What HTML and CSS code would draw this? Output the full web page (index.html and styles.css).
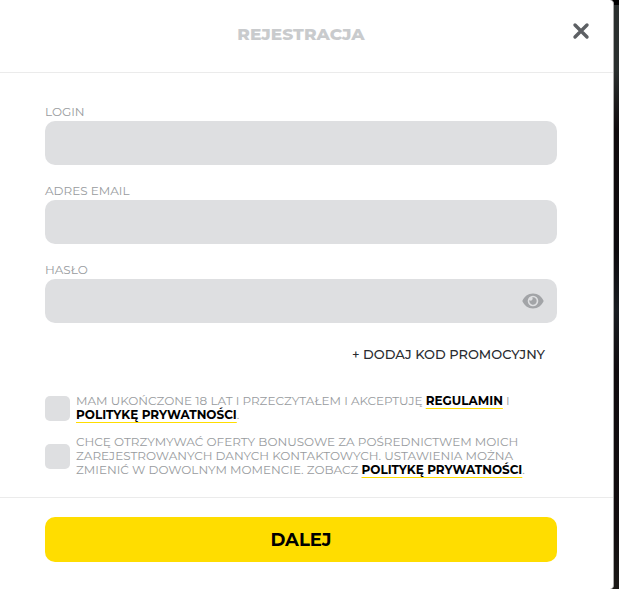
FILE: index.html
```html
<!DOCTYPE html>
<html lang="pl">
<head>
<meta charset="utf-8">
<meta name="viewport" content="width=device-width, initial-scale=1">
<title>Rejestracja</title>
<link rel="stylesheet" href="styles.css">
</head>
<body>
<main class="modal">
  <header class="modal-header">
    <h1 class="title">REJESTRACJA</h1>
    <button class="close" type="button" aria-label="Zamknij">
      <svg viewBox="0 0 18 18" width="18" height="18" aria-hidden="true"><path d="M3 3 15 15M15 3 3 15"/></svg>
    </button>
  </header>
  <form class="form">
    <div class="fields">
      <div class="field">
        <label for="login">LOGIN</label>
        <input class="input" id="login" type="text">
      </div>
      <div class="field">
        <label for="email">ADRES EMAIL</label>
        <input class="input" id="email" type="email">
      </div>
      <div class="field">
        <label for="password">HASŁO</label>
        <div class="password">
          <input class="input" id="password" type="password">
          <button class="reveal" type="button" aria-label="Pokaż hasło">
            <svg viewBox="0 0 22 16" width="22" height="16" aria-hidden="true">
              <path fill-rule="evenodd" d="M11 .5C6 .5 2.200 3.500.300 8c1.900 4.500 5.700 7.500 10.700 7.500S19.800 12.500 21.700 8C19.800 3.500 16 .5 11 .5Zm0 2.200a5.300 5.300 0 1 1 0 10.600 5.300 5.300 0 0 1 0-10.600Z"/>
              <path d="M11 4.300a3.700 3.700 0 1 1-3.600 2.800 1.900 1.900 0 0 0 2.700-2.700A4 4 0 0 1 11 4.300Z"/>
            </svg>
          </button>
        </div>
      </div>
      <button class="promo" type="button">+ DODAJ KOD PROMOCYJNY</button>
      <div class="consent">
        <input class="check" id="terms" type="checkbox">
        <label for="terms">MAM UKOŃCZONE 18 LAT I PRZECZYTAŁEM I AKCEPTUJĘ <a href="#regulamin">REGULAMIN</a> I <a href="#prywatnosc">POLITYKĘ PRYWATNOŚCI</a>.</label>
      </div>
      <div class="consent">
        <input class="check" id="offers" type="checkbox">
        <label for="offers">CHCĘ OTRZYMYWAĆ OFERTY BONUSOWE ZA POŚREDNICTWEM MOICH ZAREJESTROWANYCH DANYCH KONTAKTOWYCH. USTAWIENIA MOŻNA ZMIENIĆ W DOWOLNYM MOMENCIE. ZOBACZ <a href="#prywatnosc">POLITYKĘ PRYWATNOŚCI</a>.</label>
      </div>
    </div>
    <footer class="modal-footer">
      <button class="submit" type="submit">DALEJ</button>
    </footer>
  </form>
</main>
</body>
</html>
```
FILE: styles.css
```css
* { box-sizing: border-box; }

body {
  margin: 0;
  padding-right: 5px;
  min-height: 100vh;
  display: flex;
  background: linear-gradient(#000 0 5px, #2b302f 5px, #2b302f 70px, #100b0d 130px, #0d0b0e 250px, #191d21 310px, #100c0f 370px, #120e10 530px, #1b1917);
  font-family: Montserrat, Inter, "Liberation Sans", sans-serif;
}

button { border: 0; padding: 0; background: none; font: inherit; cursor: pointer; }
svg { display: block; }

.modal {
  flex: 1;
  background: #fff;
  border-right: 1px solid #aaa;
  border-radius: 0 4px 4px 0;
}

.modal-header {
  display: grid;
  grid-template-columns: 1fr auto 1fr;
  align-items: center;
  height: 73px;
  padding: 0 23px 4px 12px;
  border-bottom: 1px solid #ebebeb;
}

.title {
  grid-column: 2;
  margin: 0;
  font-size: 17px;
  line-height: 24px;
  font-weight: 800;
  color: #c9cbcd;
}

.close { justify-self: end; margin-bottom: 6px; }
.close path { fill: none; stroke: #5d6064; stroke-width: 3.400; stroke-linecap: round; }

.fields { padding: 30px 56px 20px 45px; }

.field { margin-bottom: 17px; }

.field label {
  display: block;
  margin-bottom: 1px;
  font-size: 12px;
  line-height: 17px;
  font-weight: 400;
  color: #989b9e;
}

.input {
  display: block;
  width: 100%;
  height: 44px;
  padding: 0 16px;
  border: 0;
  border-radius: 10px;
  background: #dedfe1;
  font: inherit;
}

.password { display: grid; align-items: center; }
.password > * { grid-area: 1 / 1; }
.password .input { padding-right: 48px; }
.reveal { justify-self: end; margin-right: 13px; }
.reveal path { fill: #a2a4a7; }

.promo {
  display: block;
  margin: 23px 12px 32px auto;
  font-size: 13px;
  line-height: 16px;
  font-weight: 500;
  color: #292b30;
}

.consent {
  display: flex;
  align-items: center;
  gap: 6px;
  margin-bottom: 13px;
}
.consent:last-child { margin-bottom: 0; }

.consent label {
  flex: 1;
  padding-right: 12px;
  font-size: 12px;
  line-height: 14px;
  font-weight: 400;
  color: #989b9e;
}

.consent a {
  color: #000;
  font-weight: 700;
  text-decoration: underline 1px #fd0;
  text-decoration-skip-ink: none;
  text-underline-offset: 3px;
}

.check {
  appearance: none;
  width: 25px;
  height: 25px;
  margin: 0;
  border-radius: 5px;
  background: #dedfe1;
}
.check:checked { background: #fd0; }

.modal-footer {
  padding: 19px 56px 27px 45px;
  border-top: 1px solid #ebebeb;
}

.submit {
  width: 100%;
  height: 45px;
  border-radius: 10px;
  background: #fd0;
  color: #000;
  font-size: 18px;
  font-weight: 700;
}
```
